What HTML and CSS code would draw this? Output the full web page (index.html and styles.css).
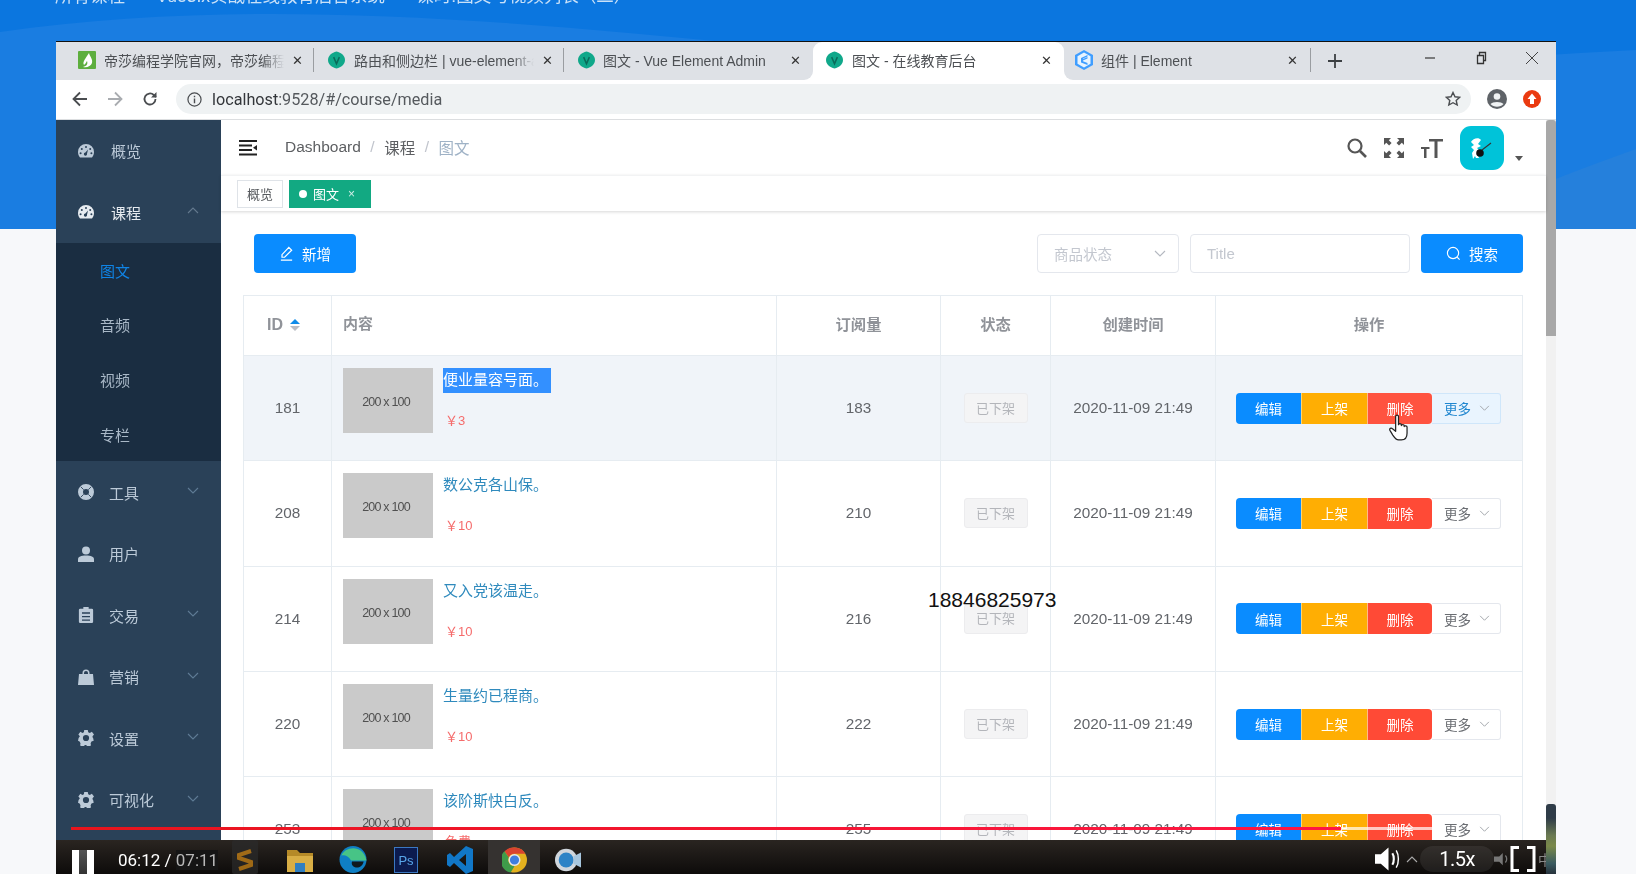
FILE: index.html
```html
<!DOCTYPE html>
<html lang="zh-CN">
<head>
<meta charset="utf-8">
<title>图文 - 在线教育后台</title>
<link rel="stylesheet" href="styles.css">
</head>
<body>
<svg class="defs" width="0" height="0" aria-hidden="true">
  <symbol id="i-down" viewBox="0 0 12 8"><path d="M1 1l5 5 5-5" fill="none" stroke="currentColor" stroke-width="1.1"/></symbol>
  <symbol id="i-up" viewBox="0 0 12 8"><path d="M1 7l5-5 5 5" fill="none" stroke="currentColor" stroke-width="1.1"/></symbol>
  <symbol id="i-gauge" viewBox="0 0 16 14"><path fill-rule="evenodd" d="M8 0a8 8 0 0 1 8 8c0 2.2-.7 4.200-2 5.400H2C.7 12.200 0 10.200 0 8a8 8 0 0 1 8-8zM8 2a1 1 0 1 0 0 2 1 1 0 0 0 0-2zM3.800 4a1 1 0 1 0 0 2 1 1 0 0 0 0-2zM12.200 4a1 1 0 1 0 0 2 1 1 0 0 0 0-2zM2.600 8.200a1 1 0 1 0 0 2 1 1 0 0 0 0-2zM13.400 8.200a1 1 0 1 0 0 2 1 1 0 0 0 0-2zM10 5.500L7.400 8.600a1.600 1.600 0 1 0 1.600 1.200z"/></symbol>
  <symbol id="i-ring" viewBox="0 0 16 16"><path fill-rule="evenodd" d="M8 0a8 8 0 1 1 0 16A8 8 0 0 1 8 0zm0 5a3 3 0 1 0 0 6 3 3 0 0 0 0-6z"/><path d="M2.700 2.700l3 3M13.300 2.700l-3 3M2.700 13.300l3-3M13.300 13.300l-3-3" stroke="#2a4158" stroke-width=".9"/></symbol>
  <symbol id="i-user" viewBox="0 0 16 16"><circle cx="8" cy="4.500" r="4"/><path d="M0 13.500C0 10.500 3 9.500 8 9.500s8 1 8 4V16H0z"/></symbol>
  <symbol id="i-clip" viewBox="0 0 16 18"><path fill-rule="evenodd" d="M5 0h6v2h3.500A1.500 1.500 0 0 1 16 3.500v13a1.500 1.500 0 0 1-1.500 1.500h-13A1.500 1.500 0 0 1 0 16.500v-13A1.500 1.500 0 0 1 1.500 2H5zM3.500 6v1.500h9V6zM3.500 10v1.500h9V10zM3.500 14v1.500h9V14z"/></symbol>
  <symbol id="i-bag" viewBox="0 0 16 16"><path fill-rule="evenodd" d="M4.500 5V4a3.500 3.500 0 0 1 7 0v1H15l1 11H0l1-11zM6 5h4V4a2 2 0 0 0-4 0z"/></symbol>
  <symbol id="i-gear" viewBox="0 0 18 18"><path fill-rule="evenodd" d="M7 0h4l.5 2.600 1.800.8L15.600 2l2.400 3-1.700 2 .4 2 .3 0 .7 3-2.500 1-1 1.800.4 2.700-3.600 1.500-1.800-2H7.700l-1.800 2-3.500-1.500.4-2.700-1-1.800L0 12l.7-3 1.400-2L.4 5l2.300-3 2.300 1.400 1.600-.8zM9 5.500a3.500 3.500 0 1 0 0 7 3.500 3.500 0 0 0 0-7z"/></symbol>
  <symbol id="i-vue" viewBox="0 0 18 18"><path fill="#10a88a" d="M9 0c5 1 9 4.500 9 9s-4 8-9 9C4 17 0 13.500 0 9s4-8 9-9z"/><path d="M6 6l3 7 3-7" fill="none" stroke="#0a6b5a" stroke-width="1.600"/></symbol>
</svg>

<div class="hero">
  <svg class="wave" viewBox="0 0 1636 229" preserveAspectRatio="none" aria-hidden="true">
    <path fill="#0b76df" d="M0 0h1636v229H0z"/>
    <path fill="#1a7de1" d="M0 32C260-5 520 20 900 60c300 30 520 0 736-10v179H0z"/>
    <path fill="#2580dc" d="M1440 229c60-30 140-60 196-80v80z"/>
  </svg>
  <p class="course-path">所有课程 — Vue3.x实战在线教育后台系统 — 课时:图文与视频列表（二）</p>
</div>

<div class="window">
  <div class="tabstrip">
    <div class="tab tab-first">
      <svg class="fav" viewBox="0 0 18 18" aria-hidden="true"><rect width="18" height="18" fill="#5dae3e" rx="1"/><path fill="#fff" d="M11 2c1 4 4 6 3 10-1 3-5 5-9 4 4-1 5-3 4-6-1 2-2 3-3 4-2-3 2-7 5-12z"/></svg>
      <span class="tab-text">帝莎编程学院官网，帝莎编程学</span>
      <span class="tab-x">✕</span>
    </div>
    <div class="tab tab-second">
      <svg class="fav fav-vue" aria-hidden="true"><use href="#i-vue"/></svg>
      <span class="tab-text">路由和侧边栏 | vue-element-a</span>
      <span class="tab-x">✕</span>
    </div>
    <div class="tab tab-third">
      <svg class="fav fav-vue" aria-hidden="true"><use href="#i-vue"/></svg>
      <span class="tab-text tab-text-plain">图文 - Vue Element Admin</span>
      <span class="tab-x">✕</span>
    </div>
    <div class="tab tab-active">
      <svg class="fav fav-vue" aria-hidden="true"><use href="#i-vue"/></svg>
      <span class="tab-text tab-text-plain">图文 - 在线教育后台</span>
      <span class="tab-x">✕</span>
    </div>
    <div class="tab tab-last">
      <svg class="fav" viewBox="0 0 18 20" aria-hidden="true"><path fill="#409eff" d="M9 0l9 5v10l-9 5-9-5V5z"/><path fill="#e8f4ff" d="M9 2.500l6.500 3.700v7.600L9 17.500l-6.500-3.700V6.200z"/><path fill="#409eff" d="M12.500 5L6 8v4.500L12.500 15v-2L8 11.200V10.500l4.500-2V7l-4.500 2V8.500l4.500-2z"/></svg>
      <span class="tab-text tab-text-plain">组件 | Element</span>
      <span class="tab-x">✕</span>
    </div>
    <div class="strip-rest">
      <svg class="new-tab" viewBox="0 0 14 14" aria-hidden="true"><path d="M7 0v14M0 7h14" stroke="#3c4043" stroke-width="1.800"/></svg>
      <div class="win-controls">
        <svg class="win-icon" viewBox="0 0 14 14" aria-hidden="true"><path d="M2 7h10" stroke="#444" stroke-width="1.300"/></svg>
        <svg class="win-icon" viewBox="0 0 14 14" aria-hidden="true"><path d="M3.500 4.500h6v8h-6zM5.500 4.500v-3h6v8h-2" fill="none" stroke="#333" stroke-width="1.300"/></svg>
        <svg class="win-icon" viewBox="0 0 14 14" aria-hidden="true"><path d="M1 1l12 12M13 1L1 13" stroke="#444" stroke-width="1"/></svg>
      </div>
    </div>
  </div>

  <div class="toolbar">
    <svg class="nav-icon" viewBox="0 0 16 16" aria-hidden="true"><path d="M15 8H2M8 1.500L1.500 8 8 14.500" fill="none" stroke="#4a4d50" stroke-width="1.800"/></svg>
    <svg class="nav-icon" viewBox="0 0 16 16" aria-hidden="true"><path d="M1 8h13M8 1.500L14.500 8 8 14.500" fill="none" stroke="#a9acb0" stroke-width="1.800"/></svg>
    <svg class="nav-icon" viewBox="0 0 16 16" aria-hidden="true"><path d="M13.500 8a5.500 5.500 0 1 1-1.700-4L14 6" fill="none" stroke="#4a4d50" stroke-width="1.800"/><path d="M14.500 1v5.500H9z" fill="#4a4d50"/></svg>
    <div class="urlbar">
      <svg class="info-icon" viewBox="0 0 16 16" aria-hidden="true"><circle cx="8" cy="8" r="7" fill="none" stroke="#4a4d50" stroke-width="1.300"/><path d="M8 7v5M8 4v1.600" stroke="#4a4d50" stroke-width="1.500"/></svg>
      <span class="url">localhost<span class="url-dim">:9528/#/course/media</span></span>
      <svg class="star-icon" viewBox="0 0 16 16" aria-hidden="true"><path d="M8 1.500l2 4.300 4.700.5-3.500 3.100 1 4.600L8 11.700 3.800 14l1-4.600L1.300 6.300 6 5.800z" fill="none" stroke="#4a4d50" stroke-width="1.400"/></svg>
    </div>
    <svg class="profile-icon" viewBox="0 0 20 20" aria-hidden="true"><circle cx="10" cy="10" r="10" fill="#5f6368"/><circle cx="10" cy="7.500" r="3.300" fill="#f1f3f4"/><path d="M3.500 15c2-2.800 11-2.800 13 0-3 3.500-10 3.500-13 0z" fill="#f1f3f4"/></svg>
    <svg class="update-icon" viewBox="0 0 18 18" aria-hidden="true"><circle cx="9" cy="9" r="9" fill="#ea3a10"/><path d="M9 3.500L13.500 9H11v5H7V9H4.500z" fill="#fff"/></svg>
  </div>

  <div class="app">
    <nav class="sidebar">
      <a class="menu-item menu-first"><svg class="menu-icon" aria-hidden="true"><use href="#i-gauge"/></svg><span class="menu-label">概览</span></a>
      <a class="menu-item menu-first menu-open"><svg class="menu-icon" aria-hidden="true"><use href="#i-gauge"/></svg><span class="menu-label">课程</span><svg class="chev" aria-hidden="true"><use href="#i-up"/></svg></a>
      <div class="submenu">
        <a class="sub-item sub-active">图文</a>
        <a class="sub-item">音频</a>
        <a class="sub-item">视频</a>
        <a class="sub-item">专栏</a>
      </div>
      <a class="menu-item"><svg class="menu-icon" aria-hidden="true"><use href="#i-ring"/></svg><span class="menu-label">工具</span><svg class="chev" aria-hidden="true"><use href="#i-down"/></svg></a>
      <a class="menu-item"><svg class="menu-icon" aria-hidden="true"><use href="#i-user"/></svg><span class="menu-label">用户</span></a>
      <a class="menu-item"><svg class="menu-icon" aria-hidden="true"><use href="#i-clip"/></svg><span class="menu-label">交易</span><svg class="chev" aria-hidden="true"><use href="#i-down"/></svg></a>
      <a class="menu-item"><svg class="menu-icon" aria-hidden="true"><use href="#i-bag"/></svg><span class="menu-label">营销</span><svg class="chev" aria-hidden="true"><use href="#i-down"/></svg></a>
      <a class="menu-item"><svg class="menu-icon" aria-hidden="true"><use href="#i-gear"/></svg><span class="menu-label">设置</span><svg class="chev" aria-hidden="true"><use href="#i-down"/></svg></a>
      <a class="menu-item"><svg class="menu-icon" aria-hidden="true"><use href="#i-gear"/></svg><span class="menu-label">可视化</span><svg class="chev" aria-hidden="true"><use href="#i-down"/></svg></a>
    </nav>

    <main class="main">
      <header class="navbar">
        <svg class="hamburger" viewBox="0 0 18 16" aria-hidden="true"><path d="M0 1h18M0 5.500h13M0 10h13M0 14.500h18" stroke="#222" stroke-width="2"/><path d="M18 5l-4 2.700 4 2.700z" fill="#222"/></svg>
        <div class="crumbs">
          <span>Dashboard</span><i class="crumb-sep">/</i><span>课程</span><i class="crumb-sep">/</i><span class="crumb-last">图文</span>
        </div>
        <div class="nav-right">
          <svg class="tool-icon" viewBox="0 0 20 20" aria-hidden="true"><circle cx="8" cy="8" r="6.500" fill="none" stroke="#555" stroke-width="2.200"/><path d="M13 13l6 6" stroke="#555" stroke-width="2.600"/></svg>
          <svg class="tool-icon" viewBox="0 0 20 20" aria-hidden="true"><g fill="#555"><path d="M0 0h7L4.800 2.200l2.800 2.800-2.500 2.500-2.800-2.800L0 7zM20 0v7l-2.200-2.200-2.800 2.800-2.500-2.500 2.800-2.800L13 0zM0 20v-7l2.300 2.200 2.800-2.800 2.500 2.500-2.800 2.800L7 20zM20 20h-7l2.300-2.300-2.800-2.800 2.500-2.500 2.800 2.800L20 13z"/></g></svg>
          <svg class="tool-icon tool-size" viewBox="0 0 22 20" aria-hidden="true"><path d="M8 1h14v2.500h-5.500V20H13.500V3.500H8zM0 9h8.500v2H5.500v9H3v-9H0z" fill="#555"/></svg>
          <div class="avatar">
            <svg viewBox="0 0 44 44" aria-hidden="true"><path fill="#fff" d="M11 16c2-4 8-5 10-2l-3 4 3 2-4 2 3 3-3 2 2 5h-3l-1-2-2 3-1-6 2-3-3-3 3-2z"/><circle cx="20" cy="27" r="3.800" fill="#111"/><path d="M22 24l9-7" stroke="#333" stroke-width="1.100"/></svg>
          </div>
          <span class="avatar-caret"></span>
        </div>
      </header>

      <div class="tagbar">
        <span class="tag">概览</span>
        <span class="tag tag-active"><i class="tag-dot"></i>图文<i class="tag-x">×</i></span>
      </div>

      <div class="content">
        <div class="actions">
          <button class="btn btn-add"><svg class="btn-icon" viewBox="0 0 16 16" aria-hidden="true"><path d="M10.500 1.500l3 3L6 12H3.200v-2.800zM2 15h12" fill="none" stroke="#fff" stroke-width="1.300"/></svg>新增</button>
          <div class="filters">
            <div class="field field-select"><span>商品状态</span><svg class="field-chev" aria-hidden="true"><use href="#i-down"/></svg></div>
            <div class="field field-input">Title</div>
            <button class="btn btn-search"><svg class="btn-icon" viewBox="0 0 16 16" aria-hidden="true"><circle cx="7.500" cy="7.500" r="6" fill="none" stroke="#fff" stroke-width="1.200"/><path d="M12 12l2.500 2.500" stroke="#fff" stroke-width="1.200"/></svg>搜索</button>
          </div>
        </div>

        <table class="grid">
          <colgroup>
            <col class="c-id"><col class="c-body"><col class="c-num"><col class="c-status"><col class="c-time"><col class="c-ops">
          </colgroup>
          <thead>
            <tr>
              <th class="th-first"><span class="th-id">ID<span class="sort"><i class="sort-up"></i><i class="sort-down"></i></span></span></th>
              <th class="th-left">内容</th>
              <th>订阅量</th>
              <th>状态</th>
              <th>创建时间</th>
              <th>操作</th>
            </tr>
          </thead>
          <tbody>
            <tr class="row-hover">
              <td>181</td>
              <td class="td-body"><div class="media"><div class="thumb">200 x 100</div><div class="info"><div class="title"><span class="selected">便业量容号面。</span></div><div class="price">￥3</div></div></div></td>
              <td>183</td>
              <td><span class="status">已下架</span></td>
              <td>2020-11-09 21:49</td>
              <td><div class="ops"><span class="op op-edit">编辑</span><span class="op op-up">上架</span><span class="op op-del">删除</span><span class="op op-more">更多<svg class="more-chev" aria-hidden="true"><use href="#i-down"/></svg></span></div></td>
            </tr>
            <tr>
              <td>208</td>
              <td class="td-body"><div class="media"><div class="thumb">200 x 100</div><div class="info"><div class="title">数公克各山保。</div><div class="price">￥10</div></div></div></td>
              <td>210</td>
              <td><span class="status">已下架</span></td>
              <td>2020-11-09 21:49</td>
              <td><div class="ops"><span class="op op-edit">编辑</span><span class="op op-up">上架</span><span class="op op-del">删除</span><span class="op op-more">更多<svg class="more-chev" aria-hidden="true"><use href="#i-down"/></svg></span></div></td>
            </tr>
            <tr>
              <td>214</td>
              <td class="td-body"><div class="media"><div class="thumb">200 x 100</div><div class="info"><div class="title">又入党该温走。</div><div class="price">￥10</div></div></div></td>
              <td>216</td>
              <td><span class="status">已下架</span></td>
              <td>2020-11-09 21:49</td>
              <td><div class="ops"><span class="op op-edit">编辑</span><span class="op op-up">上架</span><span class="op op-del">删除</span><span class="op op-more">更多<svg class="more-chev" aria-hidden="true"><use href="#i-down"/></svg></span></div></td>
            </tr>
            <tr>
              <td>220</td>
              <td class="td-body"><div class="media"><div class="thumb">200 x 100</div><div class="info"><div class="title">生量约已程商。</div><div class="price">￥10</div></div></div></td>
              <td>222</td>
              <td><span class="status">已下架</span></td>
              <td>2020-11-09 21:49</td>
              <td><div class="ops"><span class="op op-edit">编辑</span><span class="op op-up">上架</span><span class="op op-del">删除</span><span class="op op-more">更多<svg class="more-chev" aria-hidden="true"><use href="#i-down"/></svg></span></div></td>
            </tr>
            <tr>
              <td>253</td>
              <td class="td-body"><div class="media"><div class="thumb">200 x 100</div><div class="info"><div class="title">该阶斯快白反。</div><div class="price">免费</div></div></div></td>
              <td>255</td>
              <td><span class="status">已下架</span></td>
              <td>2020-11-09 21:49</td>
              <td><div class="ops"><span class="op op-edit">编辑</span><span class="op op-up">上架</span><span class="op op-del">删除</span><span class="op op-more">更多<svg class="more-chev" aria-hidden="true"><use href="#i-down"/></svg></span></div></td>
            </tr>
          </tbody>
        </table>
      </div>
    </main>

    <div class="scrollbar"><div class="scroll-thumb"></div></div>
  </div>
</div>

<svg class="hand" viewBox="0 0 20 28" aria-hidden="true"><path fill="#fff" stroke="#222" stroke-width="1.300" stroke-linejoin="round" d="M7 2.500c0-2 3-2 3 0V11c0-1.500 3-1.500 3 0v1c0-1.500 3-1.500 3 0v1c0-1.200 3-1 3 .5V20c0 4-2 7-6 7h-3c-3 0-4-2-6-5l-3-5c-1-2 1-3 3-1.500L7 18z"/></svg>
<div class="phone">18846825973</div>

<div class="taskbar">
  <div class="pause"><i></i><i></i></div>
  <div class="time"><span class="time-now">06:12 /</span> <span class="time-total">07:11</span></div>
  <svg class="app-icon app-sublime" viewBox="0 0 26 34" aria-hidden="true"><rect width="26" height="34" fill="#2b2b2b" rx="2"/><path d="M19 11L7 15v3l12 4v3L7 29" fill="none" stroke="#d98e18" stroke-width="4"/></svg>
  <svg class="app-icon app-files" viewBox="0 0 26 24" aria-hidden="true"><path fill="#b58a28" d="M0 2h10l3 3h13v19H0z"/><path fill="#d8ae45" d="M0 8h26v16H0z"/><rect width="10" height="9" x="8" y="15" fill="#2f7fc1"/></svg>
  <svg class="app-icon app-edge" viewBox="0 0 28 28" aria-hidden="true"><circle cx="14" cy="14" r="14" fill="#0f7fc4"/><path fill="#47c486" d="M2 10C5 1 24-3 28 15H12c-3-5-7-6-10-5z"/><path fill="#10181d" d="M13 16h12c-1 5-5 7-9 6-3-1-4-4-3-6z"/></svg>
  <svg class="app-icon app-ps" viewBox="0 0 24 26" aria-hidden="true"><rect width="24" height="26" fill="#0b1b4f" stroke="#3b78c2" stroke-width="2"/><text x="12" y="18" fill="#57a5e8" font-family="Liberation Sans" font-size="13" text-anchor="middle">Ps</text></svg>
  <svg class="app-icon app-code" viewBox="0 0 26 28" aria-hidden="true"><path fill="#1177c7" d="M19 0l7 3v22l-7 3L7 17l-4 4-3-2v-10l3-2 4 4zM19 8l-7 6 7 6z"/></svg>
  <div class="app-chrome">
    <svg class="chrome" viewBox="0 0 26 26" aria-hidden="true"><circle cx="13" cy="13" r="13" fill="#e3b11e"/><path fill="#d9432f" d="M13 0a13 13 0 0 1 11.300 6.500H13a6.500 6.500 0 0 0-6 4L2.500 4A13 13 0 0 1 13 0z"/><path fill="#3f9c4a" d="M2.500 4L7 10.500A6.500 6.500 0 0 0 13 19.500L9 26A13 13 0 0 1 2.500 4z"/><circle cx="13" cy="13" r="5.500" fill="#3f7ddf" stroke="#e8e8e8" stroke-width="1.500"/></svg>
  </div>
  <svg class="app-icon app-zoom" viewBox="0 0 28 26" aria-hidden="true"><circle cx="12" cy="13" r="12" fill="#d0d6dc"/><circle cx="12" cy="13" r="8" fill="#2d83c6"/><path d="M20 9l8-4v16l-8-4z" fill="#a7c6de"/></svg>
  <div class="tray">
    <svg class="volume" viewBox="0 0 28 24" aria-hidden="true"><path d="M0 7h6l8-7v24l-8-7H0z" fill="#fff"/><path d="M18 6c2 3 2 9 0 12" fill="none" stroke="#fff" stroke-width="2.200"/><path d="M22 3c3 5 3 13 0 18" fill="none" stroke="#fff" stroke-width="1.500"/></svg>
    <svg class="tray-up" viewBox="0 0 12 8" aria-hidden="true"><use href="#i-up"/></svg>
    <div class="speed">1.5x</div>
    <svg class="tray-dim" viewBox="0 0 16 14" aria-hidden="true"><path d="M0 4h6l4-4v14l-4-4H0z" fill="#777"/><path d="M13 3c2 2 2 6 0 8" fill="none" stroke="#777" stroke-width="1.500"/></svg>
    <svg class="full" viewBox="0 0 26 26" aria-hidden="true"><path d="M9 1.500H2v23h7M17 1.500h7v23h-7" fill="none" stroke="#fff" stroke-width="3"/></svg>
    <span class="ime">中</span>
  </div>
</div>
<div class="meter"></div>
<div class="progress"><div class="progress-played"></div></div>
</body>
</html>
```
FILE: styles.css
```css
* { box-sizing: border-box; }
html, body { margin: 0; height: 874px; overflow: hidden; }
body {
  position: relative;
  width: 1636px;
  background: #f7f8fa;
  font-family: "Liberation Sans", "Noto Sans CJK SC", sans-serif;
  padding: 41px 0 0 56px;
}
.defs { position: absolute; }
.hero { position: absolute; left: 0; top: 0; width: 1636px; height: 229px; overflow: hidden; }
.wave { display: block; width: 100%; height: 100%; }
.course-path { position: absolute; left: 55px; top: -16px; margin: 0; font-size: 17.500px; line-height: 24px; word-spacing: 2px; color: rgba(255,255,255,.78); white-space: nowrap; filter: blur(.4px); }

.window { position: relative; width: 1500px; height: 833px; display: flex; flex-direction: column; background: #fff; border-top: 1px solid #111; filter: blur(.35px); }

/* browser chrome */
.tabstrip { display: flex; height: 38px; flex: none; background: linear-gradient(#dee1e6 50%, #fff 50%); color: #4d5054; font-size: 14px; }
.tab { display: flex; align-items: center; height: 38px; background: #dee1e6; padding-bottom: 2px; }
.tab-first { width: 258px; padding-left: 22px; }
.tab-second { width: 250px; padding-left: 14px; }
.tab-third { width: 249px; padding-left: 14px; border-bottom-right-radius: 9px; }
.tab-active { width: 251px; padding-left: 13px; background: #fff; border-radius: 9px 9px 0 0; }
.tab-last { width: 247px; padding-left: 11px; border-bottom-left-radius: 9px; }
.tab-first::after, .tab-second::after, .tab-last::after { content: ""; width: 1px; height: 24px; background: #9a9da1; flex: none; }
.fav { width: 18px; height: 20px; flex: none; margin-right: 8px; }
.fav-vue { width: 17px; height: 18px; margin-right: 9px; }
.tab-third .fav-vue { margin-right: 8px; }
.tab-text { flex: 1; min-width: 0; overflow: hidden; white-space: nowrap; -webkit-mask-image: linear-gradient(90deg, #000 88%, transparent); mask-image: linear-gradient(90deg, #000 88%, transparent); }
.tab-text-plain { -webkit-mask-image: none; mask-image: none; }
.tab-x { flex: none; width: 14px; margin: 0 11px 0 6px; font-size: 13px; color: #333; text-align: center; }
.tab-first .tab-x, .tab-second .tab-x { margin-right: 9px; }
.strip-rest { flex: 1; display: flex; align-items: center; background: #dee1e6; height: 38px; padding-left: 17px; }
.new-tab { width: 14px; height: 14px; }
.win-controls { display: flex; margin-left: auto; gap: 37px; margin-right: 17px; margin-top: -6px; }
.win-icon { width: 14px; height: 14px; }

.toolbar { flex: none; display: flex; align-items: center; height: 40px; padding: 4px 14px 5px 16px; background: #fff; border-bottom: 1px solid #dcdee0; }
.nav-icon { width: 16px; height: 16px; margin-right: 19px; flex: none; }
.urlbar { display: flex; align-items: center; flex: none; width: 1295px; height: 30px; margin-left: -1px; padding: 0 10px 0 11px; background: #eff2f3; border-radius: 15px; }
.info-icon { width: 15px; height: 15px; flex: none; margin-right: 10px; }
.url { font-size: 16.200px; color: #33363a; font-family: "Roboto", sans-serif; }
.url-dim { color: #55595d; }
.star-icon { width: 16px; height: 16px; margin-left: auto; }
.profile-icon { width: 20px; height: 20px; margin-left: 16px; flex: none; }
.update-icon { width: 18px; height: 18px; margin-left: 16px; flex: none; }

/* app */
.app { flex: 1; min-height: 0; display: flex; overflow: hidden; }
.sidebar { flex: none; width: 165px; background: #2a4158; color: #bccad8; overflow: hidden; }
.menu-item { display: flex; align-items: center; height: 61.500px; padding-left: 22px; font-size: 15px; }
.menu-first .menu-label { margin-left: 17px; }
.menu-open { color: #e6ebf0; }
.menu-icon { width: 16px; height: 16px; flex: none; fill: currentColor; }
.menu-label { margin-left: 15px; }
.chev { width: 12px; height: 8px; margin-left: auto; margin-right: 22px; margin-top: -2px; color: #5f7b95; }
.menu-open .chev { margin-top: -4px; color: #64798e; }
.submenu { background: #1a2d41; }
.sub-item { display: flex; align-items: center; height: 54.600px; padding-left: 44px; font-size: 15px; color: #a9b8c7; }
.sub-active { color: #0f84e6; }

.main { flex: 1; min-width: 0; display: flex; flex-direction: column; }
.navbar { flex: none; display: flex; align-items: center; height: 55px; padding-left: 18px; }
.hamburger { width: 18px; height: 16px; flex: none; }
.crumbs { margin-left: 28px; font-size: 15.500px; color: #5d5f62; display: flex; align-items: center; padding-bottom: 2px; }
.crumb-sep { font-style: normal; color: #c0c4cc; margin: 0 9.500px; }
.crumb-last { color: #9fb2c6; }
.nav-right { margin-left: auto; display: flex; align-items: center; }
.tool-icon { width: 20px; height: 20px; margin-right: 17px; flex: none; }
.tool-size { width: 22px; margin-right: 17px; }
.avatar { width: 44px; height: 44px; border-radius: 11px; background: #00c3d9; overflow: hidden; }
.avatar svg { display: block; }
.avatar-caret { width: 0; height: 0; margin: 21px 23px 0 11px; border: 4px solid transparent; border-top: 5px solid #555; border-bottom: 0; }

.tagbar { flex: none; display: flex; gap: 6px; align-items: center; height: 36px; padding-left: 16px; border-top: 1px solid #f2f3f4; box-shadow: 0 1px 3px rgba(0,0,0,.16); position: relative; }
.tag { display: flex; align-items: center; height: 28px; padding: 0 9px; font-size: 13px; color: #55585c; border: 1px solid #dfe3e8; background: #fff; }
.tag-active { background: #12a982; border-color: #12a982; color: #fff; padding: 0 15px 0 9px; }
.tag-dot { width: 8px; height: 8px; border-radius: 50%; background: #fff; margin-right: 6px; }
.tag-x { font-style: normal; margin-left: 9px; font-size: 12px; opacity: .8; }

.content { flex: 1; min-height: 0; overflow: hidden; padding: 23px 23px 0 22px; }
.actions { display: flex; justify-content: space-between; padding-left: 11px; height: 39px; }
.filters { display: flex; gap: 11px; }
.btn { display: flex; align-items: center; justify-content: center; width: 102px; height: 39px; border: 0; border-radius: 4px; background: #0a8cff; color: #fff; font: 14.500px "Liberation Sans", "Noto Sans CJK SC", sans-serif; padding: 0; }
.btn-icon { width: 15px; height: 15px; margin-right: 8px; }
.field { height: 39px; display: flex; align-items: center; border: 1px solid #e4e7ed; border-radius: 4px; color: #c3c7cf; font-size: 15px; padding-left: 16px; background: #fff; }
.field-select { width: 142px; justify-content: space-between; padding-right: 12px; font-size: 14.500px; }
.field-chev { width: 12px; height: 8px; color: #b4b8c0; }
.field-input { width: 220px; }

.grid { width: 1279px; margin-top: 22px; border-collapse: collapse; table-layout: fixed; color: #62656a; font-size: 15.300px; text-align: center; }
.c-id { width: 88px; }
.c-body { width: 445px; }
.c-num { width: 164px; }
.c-status { width: 110px; }
.c-time { width: 165px; }
.c-ops { width: 307px; }
.grid th, .grid td { border: 1px solid #e6ecf1; padding: 0; }
.grid th { height: 60px; color: #909399; font-size: 15.300px; font-weight: 700; padding-bottom: 6px; }
.grid .th-first { padding-bottom: 2px; }
.grid .th-left { text-align: left; padding-left: 11px; font-size: 15px; }
.th-id { display: inline-flex; align-items: center; gap: 7px; padding-right: 8px; font-size: 16px; }
.sort { display: inline-flex; flex-direction: column; gap: 2px; }
.sort i { display: block; width: 0; height: 0; border: 5.500px solid transparent; }
.sort-up { border-top: 0 !important; border-bottom-color: #0f8ce9 !important; border-bottom-width: 5px !important; }
.sort-down { border-bottom: 0 !important; border-top-color: #b9bdc4 !important; border-top-width: 5px !important; }
.grid tbody tr { height: 105.300px; }
.grid tbody td { vertical-align: middle; }
.grid .td-body { vertical-align: top; padding: 12px 0 0 11px; text-align: left; }
.row-hover td { background: #f0f4f9; }
.media { display: flex; }
.thumb { flex: none; width: 90px; height: 65px; background: #cacaca; color: #505050; font-size: 12.500px; letter-spacing: -.8px; display: flex; align-items: center; justify-content: center; padding: 3px 4px 0 0; }
.info { margin-left: 10px; }
.title { height: 25px; line-height: 23px; font-size: 15px; color: #2f8abd; }
.selected { display: inline-block; width: 108px; background: #3390ff; color: #fff; height: 25px; }
.price { margin-top: 17px; padding-left: 2px; height: 22px; line-height: 22px; font-size: 13px; color: #f56c6c; }
.status { display: inline-flex; align-items: center; justify-content: center; width: 64px; height: 30px; padding-bottom: 2px; background: #f4f4f5; border: 1px solid #ececee; border-radius: 3px; color: #b3b5ba; font-size: 13px; }
.ops { display: flex; padding-left: 20px; }
.op { display: flex; align-items: center; justify-content: center; height: 31px; font-size: 13.500px; color: #fff; width: 65px; }
.op-edit { background: #0a8cff; border-radius: 4px 0 0 4px; }
.op-up { background: #ffae03; border-left: 1px solid #ffd470; width: 66px; }
.op-del { background: #ff4a36; border-left: 1px solid #ffb98a; border-radius: 0 4px 4px 0; }
.op-more { width: 69px; padding-left: 2px; color: #6a6d72; background: #fff; border: 1px solid #e4e7ed; border-left: 0; border-radius: 0 3px 3px 0; }
.row-hover .op-del { background: #ff5340; }
.row-hover .op-more { background: #e9f4fe; border-color: #cfe6fa; color: #1f86cf; }
.more-chev { width: 11px; height: 7px; margin-left: 8px; color: #a0a4aa; }

.scrollbar { flex: none; width: 10px; background: #f1f1f1; }
.scroll-thumb { height: 216px; background: #a8a8a8; border-radius: 3px 3px 0 0; }

/* video overlay */
.hand { position: absolute; left: 1389px; top: 414px; width: 19px; height: 27px; }
.phone { position: absolute; left: 928px; top: 587px; font-size: 21px; line-height: 26px; color: #111; }
.progress { position: absolute; left: 71px; top: 827px; width: 1362px; height: 3px; background: rgba(255,255,255,.7); }
.progress-played { width: 93.250%; height: 100%; background: linear-gradient(90deg, #e8141c, #ff1744); }
.meter { position: absolute; left: 1546px; top: 804px; width: 10px; height: 70px; background: linear-gradient(#2f3c48 20%, #6b7a52 45%, #7b8a4a 60%, #3a5a60 85%, #27323c); border-radius: 3px 3px 0 0; }

.taskbar { position: absolute; left: 56px; top: 840px; width: 1490px; height: 34px; background: linear-gradient(#2a2521, #0d0b0a); display: flex; align-items: center; color: #fff; filter: blur(.35px); }
.pause { display: flex; gap: 8px; margin: 10px 0 0 16px; height: 24px; align-self: flex-start; background: linear-gradient(#555, #333); }
.pause i { display: block; width: 7px; height: 24px; background: #fff; }
.time { margin-left: 24px; font-size: 17px; white-space: nowrap; padding-top: 5px; font-family: "Roboto", sans-serif; }
.time-total { color: #b8b8b8; background: #151515; }
.app-icon { flex: none; height: 26px; }
.app-sublime { width: 26px; height: 34px; margin-left: 14px; align-self: flex-end; opacity: .7; }
.app-files { width: 26px; height: 24px; margin-left: 29px; margin-top: 5px; }
.app-edge { width: 28px; height: 27px; margin-left: 26px; margin-top: 5px; }
.app-ps { width: 24px; height: 26px; margin-left: 27px; margin-top: 5px; }
.app-code { width: 26px; height: 28px; margin-left: 29px; margin-top: 5px; }
.app-chrome { flex: none; width: 52px; height: 34px; margin-left: 15px; background: #353230; display: flex; align-items: center; justify-content: center; }
.chrome { width: 25px; height: 26px; margin-top: 6px; }
.app-zoom { width: 26px; height: 26px; margin-left: 15px; margin-top: 5px; }
.tray { margin-left: auto; display: flex; align-items: center; height: 34px; padding-top: 4px; position: relative; }
.volume { width: 27px; height: 24px; }
.tray-up { width: 12px; height: 8px; color: #aaa; margin-left: 4px; }
.speed { width: 74px; height: 26px; margin-left: 2px; background: rgba(255,255,255,.07); border-radius: 13px; text-align: center; font-size: 20px; line-height: 26px; letter-spacing: -.5px; font-family: "Roboto", sans-serif; }
.tray-dim { width: 14px; height: 14px; margin-left: 0; flex: none; }
.full { width: 26px; height: 26px; margin-left: 2px; }
.ime { font-size: 14px; color: #8a8a8a; margin-left: 2px; width: 8px; white-space: nowrap; overflow: hidden; }
```
